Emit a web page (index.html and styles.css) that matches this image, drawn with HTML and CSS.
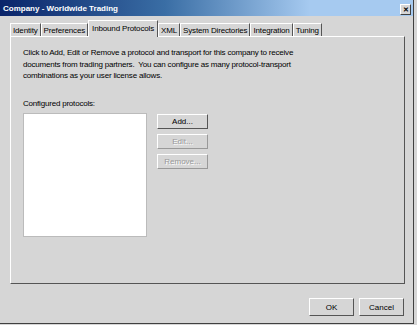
FILE: index.html
```html
<!DOCTYPE html>
<html lang="en">
<head>
    <meta charset="UTF-8">
    <title>Company - Worldwide Trading</title>
    <link rel="stylesheet" href="styles.css">
</head>
<body>
    <div class="window">
        <div class="titlebar">
            <span class="title">Company - Worldwide Trading</span>
            <span class="close">&#x2715;</span>
        </div>

        <div class="tabs">
            <div class="tab">Identity</div>
            <div class="tab">Preferences</div>
            <div class="tab active">Inbound Protocols</div>
            <div class="tab">XML</div>
            <div class="tab">System Directories</div>
            <div class="tab">Integration</div>
            <div class="tab">Tuning</div>
        </div>

        <div class="panel">
            <p class="intro">Click to Add, Edit or Remove a protocol and transport for this company to receive<br>
                documents from trading partners.&nbsp; You can configure as many protocol-transport<br>
                combinations as your user license allows.</p>

            <div class="label">Configured protocols:</div>
            <div class="protocols">
                <div class="listbox"></div>
                <div class="side-buttons">
                    <button class="btn">Add...</button>
                    <button class="btn" disabled>Edit...</button>
                    <button class="btn" disabled>Remove...</button>
                </div>
            </div>
        </div>

        <div class="footer">
            <button class="btn big">OK</button>
            <button class="btn big">Cancel</button>
        </div>
    </div>
</body>
</html>
```

FILE: styles.css
```css
body {
    margin: 0;
    background-color: #d6d6d6;
    font-family: "Liberation Sans", Arial, sans-serif;
    font-size: 8px;
    color: #000;
}

.window {
    width: 414px;
    height: 324px;
    box-sizing: border-box;
    border-right: 1px solid #404040;
    border-bottom: 1px solid #404040;
    background-color: #d6d6d6;
}

.titlebar {
    height: 16px;
    display: flex;
    align-items: center;
    justify-content: space-between;
    padding: 0 2px 0 3px;
    background: linear-gradient(to right, #0a246a 0%, #3a6ea5 40%, #a6caf0 75%, #a6caf0 100%);
}

.title {
    color: white;
    font-weight: bold;
    font-size: 8px;
}

.close {
    width: 11px;
    height: 11px;
    margin-top: 2px;
    background-color: #d6d6d6;
    border-top: 1px solid #fff;
    border-left: 1px solid #fff;
    border-right: 1px solid #404040;
    border-bottom: 1px solid #404040;
    box-sizing: border-box;
    font-size: 7px;
    font-weight: bold;
    line-height: 9px;
    text-align: center;
}

.tabs {
    display: flex;
    align-items: flex-end;
    height: 16px;
    margin-top: 4px;
    padding-left: 10px;
    position: relative;
    z-index: 1;
}

.tab {
    height: 13px;
    line-height: 13px;
    padding: 0 2px;
    box-sizing: border-box;
    border-top: 1px solid #fff;
    border-left: 1px solid #fff;
    border-right: 1px solid #555;
    white-space: nowrap;
    letter-spacing: -0.15px;
}

.tab.active {
    height: 17px;
    line-height: 15px;
    margin-bottom: -1px;
    padding: 0 3px;
    background-color: #d6d6d6;
}

.panel {
    height: 248px;
    margin: 0 8px 0 10px;
    box-sizing: border-box;
    border-top: 1px solid #fff;
    border-left: 1px solid #fff;
    border-right: 1px solid #555;
    border-bottom: 1px solid #555;
    padding: 10px 12px;
}

.intro {
    margin: 0;
    line-height: 11.5px;
    white-space: nowrap;
    letter-spacing: -0.2px;
}

.label {
    margin-top: 17px;
    letter-spacing: -0.2px;
}

.protocols {
    display: flex;
    gap: 10px;
    margin-top: 5px;
}

.listbox {
    width: 124px;
    height: 124px;
    box-sizing: border-box;
    background-color: white;
    border: 1px solid #bbb;
}

.side-buttons {
    display: flex;
    flex-direction: column;
    gap: 5px;
    margin-top: 1px;
}

.btn {
    width: 51px;
    height: 15px;
    padding: 0;
    font-family: inherit;
    font-size: 8px;
    color: #000;
    background-color: #d6d6d6;
    border-top: 1px solid #fff;
    border-left: 1px solid #fff;
    border-right: 1px solid #555;
    border-bottom: 1px solid #555;
    border-radius: 0;
}

.btn:disabled {
    color: #999;
    text-shadow: 1px 1px 0 #fff;
    border-right-color: #999;
    border-bottom-color: #999;
}

.footer {
    display: flex;
    justify-content: flex-end;
    gap: 5px;
    padding-right: 9px;
    margin-top: 14px;
}

.btn.big {
    width: 45px;
    height: 18px;
}
```
